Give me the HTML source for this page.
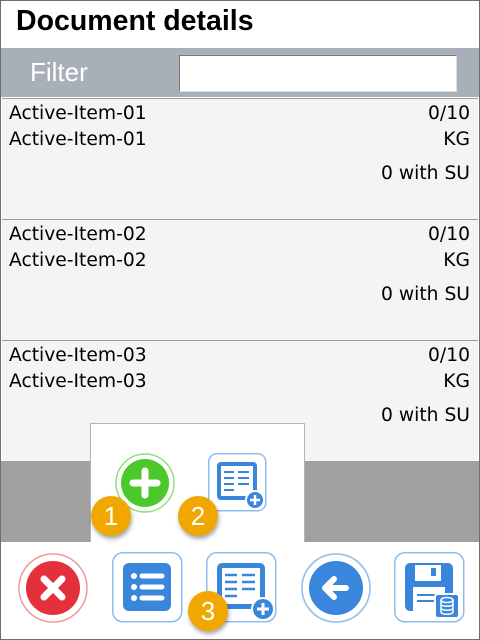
<!DOCTYPE html>
<html><head><meta charset="utf-8"><style>
*{margin:0;padding:0;box-sizing:border-box}
body{width:480px;height:640px;position:relative;overflow:hidden;background:#fff;font-family:"DejaVu Sans","Liberation Sans",sans-serif}
.frame{position:absolute;left:0;top:0;width:480px;height:640px;border:1px solid #6e6e6e;pointer-events:none;z-index:10}
.title{position:absolute;left:16px;top:5px;font:bold 28.5px "Liberation Sans",sans-serif;color:#000}
.fbar{position:absolute;left:1px;top:48px;width:478px;height:49px;background:#a7b0b8}
.flabel{position:absolute;left:30px;top:57px;font:26px "Liberation Sans",sans-serif;color:#fff}
.input{position:absolute;left:179px;top:55px;width:278px;height:37px;background:#fff;border:1px solid #777;border-right-color:#ddd;border-bottom-color:#ddd}
.item{position:absolute;left:2px;width:476px;height:121px;background:#f4f4f4;border-top:1px solid #999;font-size:18.7px;color:#000}
.item div{position:absolute;white-space:nowrap}
.l{left:7px}.r{right:8px}
.gray{position:absolute;left:1px;top:461px;width:478px;height:81px;background:#a0a0a0}
.popup{position:absolute;left:90px;top:423px;width:215px;height:120px;background:#fff;border:1px solid #a9b6c4;border-bottom:none}
.bbar{position:absolute;left:1px;top:542px;width:478px;height:97px;background:#fff}
.badge{position:absolute;width:40px;height:40px;border-radius:50%;background:#f0a800;color:#fff;font:26px "Liberation Sans",sans-serif;text-align:center;line-height:40px;box-shadow:1px 3px 4px rgba(0,0,0,.35);z-index:5}
svg{position:absolute}
</style></head><body>
<div class="title">Document details</div>
<div class="fbar"></div>
<div class="flabel">Filter</div>
<div class="input"></div>

<div class="item" style="top:98px"><div class="l" style="top:4px">Active-Item-01</div><div class="r" style="top:4px">0/10</div><div class="l" style="top:30px">Active-Item-01</div><div class="r" style="top:30px">KG</div><div class="r" style="top:64px">0 with SU</div></div>
<div class="item" style="top:219px"><div class="l" style="top:4px">Active-Item-02</div><div class="r" style="top:4px">0/10</div><div class="l" style="top:30px">Active-Item-02</div><div class="r" style="top:30px">KG</div><div class="r" style="top:64px">0 with SU</div></div>
<div class="item" style="top:340px"><div class="l" style="top:4px">Active-Item-03</div><div class="r" style="top:4px">0/10</div><div class="l" style="top:30px">Active-Item-03</div><div class="r" style="top:30px">KG</div><div class="r" style="top:64px">0 with SU</div></div>

<div class="gray"></div>
<div class="popup"></div>
<svg style="left:114px;top:452px" width="62" height="62" viewBox="0 0 62 62">
<circle cx="31" cy="31" r="29" fill="#fff" stroke="#8ee07a" stroke-width="1.5"/>
<circle cx="31" cy="31" r="24" fill="#4cc82c"/>
<path d="M31 19V43M19 31H43" stroke="#fff" stroke-width="7" stroke-linecap="round"/></svg>
<svg style="left:208px;top:453px" width="60" height="60" viewBox="0 0 60 60">
<rect x="0.75" y="0.75" width="57" height="57" rx="8" fill="#fff" stroke="#8cbcee" stroke-width="1.5"/>
<rect x="9" y="9" width="40" height="38" rx="4" fill="#3a86dc"/><rect x="13" y="13" width="32" height="30" fill="#fff"/>
<path d="M16 19h10M30 19h11M16 25h10M30 25h11M16 31h10M30 31h11M16 37h10" stroke="#3a86dc" stroke-width="2"/>
<circle cx="47" cy="47" r="10" fill="#fff"/><circle cx="47" cy="47" r="8" fill="#3a86dc"/>
<path d="M47 42v10M42 47h10" stroke="#fff" stroke-width="2.5"/></svg>
<div class="badge" style="left:91px;top:496px">1</div>
<div class="badge" style="left:178px;top:496px">2</div>

<div class="bbar"></div>
<svg style="left:17px;top:552px" width="72" height="72" viewBox="0 0 72 72">
<circle cx="36" cy="36" r="34" fill="#fff" stroke="#ef9a9a" stroke-width="1.5"/>
<circle cx="36" cy="36" r="27" fill="#e3303b"/>
<path d="M27 27L45 45M45 27L27 45" stroke="#fff" stroke-width="7" stroke-linecap="round"/></svg>
<svg style="left:112px;top:552px" width="71" height="71" viewBox="0 0 71 71">
<rect x="0.75" y="0.75" width="69" height="69" rx="10" fill="#fff" stroke="#8cbcee" stroke-width="1.5"/>
<rect x="11" y="11" width="48" height="48" rx="6" fill="#3a86dc"/>
<circle cx="22" cy="24" r="3" fill="#fff"/><circle cx="22" cy="35" r="3" fill="#fff"/><circle cx="22" cy="46" r="3" fill="#fff"/>
<path d="M30 24h20M30 35h20M30 46h20" stroke="#fff" stroke-width="5" stroke-linecap="round"/></svg>
<svg style="left:206px;top:552px" width="72" height="72" viewBox="0 0 72 72">
<rect x="0.75" y="0.75" width="69" height="69" rx="10" fill="#fff" stroke="#8cbcee" stroke-width="1.5"/>
<rect x="11" y="11" width="48" height="46" rx="5" fill="#3a86dc"/><rect x="16" y="16" width="38" height="36" fill="#fff"/>
<path d="M19 23h12M36 23h13M19 30h12M36 30h13M19 37h12M36 37h13M19 44h12" stroke="#3a86dc" stroke-width="2.5"/>
<circle cx="57" cy="57" r="12" fill="#fff"/><circle cx="57" cy="57" r="10" fill="#3a86dc"/>
<path d="M57 51v12M51 57h12" stroke="#fff" stroke-width="3"/></svg>
<svg style="left:300px;top:552px" width="72" height="72" viewBox="0 0 72 72">
<circle cx="36" cy="36" r="34" fill="#fff" stroke="#8cbcee" stroke-width="1.5"/>
<circle cx="36" cy="36" r="27" fill="#3a86dc"/>
<path d="M46 36H26M34 27L25 36L34 45" stroke="#fff" stroke-width="6" stroke-linecap="round" stroke-linejoin="round" fill="none"/></svg>
<svg style="left:394px;top:552px" width="71" height="71" viewBox="0 0 71 71">
<rect x="0.75" y="0.75" width="69" height="69" rx="10" fill="#fff" stroke="#8cbcee" stroke-width="1.5"/>
<rect x="11" y="11" width="48" height="48" rx="5" fill="#3a86dc"/>
<rect x="21" y="13" width="26" height="16" fill="#fff"/><rect x="37" y="16" width="5" height="8" fill="#3a86dc"/>
<rect x="19" y="35" width="32" height="24" fill="#fff"/><path d="M23 43h22M23 49h22" stroke="#3a86dc" stroke-width="2"/>
<rect x="41" y="42" width="24" height="24" rx="3" fill="#3a86dc" stroke="#fff" stroke-width="2"/>
<ellipse cx="53" cy="48" rx="6" ry="2.5" fill="none" stroke="#fff" stroke-width="1.5"/>
<path d="M47 48v12c0 3 12 3 12 0V48M47 52c0 3 12 3 12 0M47 56c0 3 12 3 12 0" stroke="#fff" stroke-width="1.5" fill="none"/></svg>
<div class="badge" style="left:188px;top:591px">3</div>
<div class="frame"></div>
</body></html>
